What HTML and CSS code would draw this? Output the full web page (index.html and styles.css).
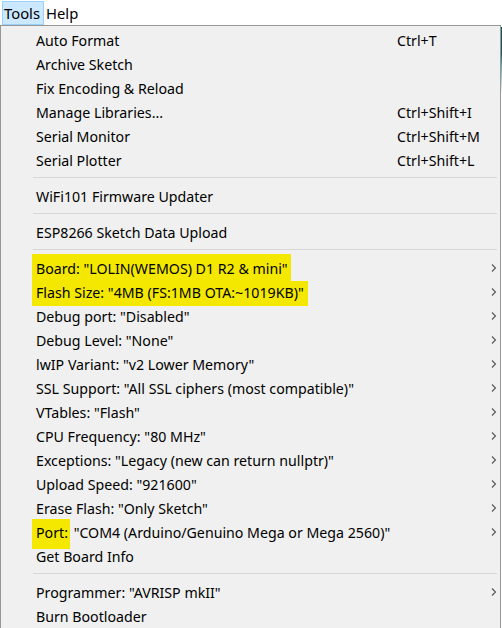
FILE: index.html
```html
<!DOCTYPE html>
<html>
<head>
<meta charset="utf-8">
<link rel="stylesheet" href="styles.css">
</head>
<body>
<div class="menubar">
  <span class="top-item active">Tools</span>
  <span class="top-item">Help</span>
</div>
<div class="stage">
  <div class="menu">
    <div class="row"><span class="label">Auto Format</span><span class="key">Ctrl+T</span><span class="arrow"></span></div>
    <div class="row"><span class="label">Archive Sketch</span><span class="key"></span><span class="arrow"></span></div>
    <div class="row"><span class="label">Fix Encoding &amp; Reload</span><span class="key"></span><span class="arrow"></span></div>
    <div class="row"><span class="label">Manage Libraries...</span><span class="key">Ctrl+Shift+I</span><span class="arrow"></span></div>
    <div class="row"><span class="label">Serial Monitor</span><span class="key">Ctrl+Shift+M</span><span class="arrow"></span></div>
    <div class="row"><span class="label">Serial Plotter</span><span class="key">Ctrl+Shift+L</span><span class="arrow"></span></div>
    <div class="sep"></div>
    <div class="row"><span class="label">WiFi101 Firmware Updater</span><span class="key"></span><span class="arrow"></span></div>
    <div class="sep"></div>
    <div class="row"><span class="label">ESP8266 Sketch Data Upload</span><span class="key"></span><span class="arrow"></span></div>
    <div class="sep"></div>
    <div class="row"><span class="label"><span class="hl hl-board">Board: "LOLIN(WEMOS) D1 R2 &amp; mini"</span></span><span class="key"></span><span class="arrow"><svg width="6" height="10" viewBox="0 0 6 10"><path d="M1 1.5 L4.5 5 L1 8.5" fill="none" stroke="#555" stroke-width="1.1"/></svg></span></div>
    <div class="row"><span class="label"><span class="hl hl-flash">Flash Size: "4MB (FS:1MB OTA:~1019KB)"</span></span><span class="key"></span><span class="arrow"><svg width="6" height="10" viewBox="0 0 6 10"><path d="M1 1.5 L4.5 5 L1 8.5" fill="none" stroke="#555" stroke-width="1.1"/></svg></span></div>
    <div class="row"><span class="label">Debug port: "Disabled"</span><span class="key"></span><span class="arrow"><svg width="6" height="10" viewBox="0 0 6 10"><path d="M1 1.5 L4.5 5 L1 8.5" fill="none" stroke="#555" stroke-width="1.1"/></svg></span></div>
    <div class="row"><span class="label">Debug Level: "None"</span><span class="key"></span><span class="arrow"><svg width="6" height="10" viewBox="0 0 6 10"><path d="M1 1.5 L4.5 5 L1 8.5" fill="none" stroke="#555" stroke-width="1.1"/></svg></span></div>
    <div class="row"><span class="label">lwIP Variant: "v2 Lower Memory"</span><span class="key"></span><span class="arrow"><svg width="6" height="10" viewBox="0 0 6 10"><path d="M1 1.5 L4.5 5 L1 8.5" fill="none" stroke="#555" stroke-width="1.1"/></svg></span></div>
    <div class="row"><span class="label">SSL Support: "All SSL ciphers (most compatible)"</span><span class="key"></span><span class="arrow"><svg width="6" height="10" viewBox="0 0 6 10"><path d="M1 1.5 L4.5 5 L1 8.5" fill="none" stroke="#555" stroke-width="1.1"/></svg></span></div>
    <div class="row"><span class="label">VTables: "Flash"</span><span class="key"></span><span class="arrow"><svg width="6" height="10" viewBox="0 0 6 10"><path d="M1 1.5 L4.5 5 L1 8.5" fill="none" stroke="#555" stroke-width="1.1"/></svg></span></div>
    <div class="row"><span class="label">CPU Frequency: "80 MHz"</span><span class="key"></span><span class="arrow"><svg width="6" height="10" viewBox="0 0 6 10"><path d="M1 1.5 L4.5 5 L1 8.5" fill="none" stroke="#555" stroke-width="1.1"/></svg></span></div>
    <div class="row"><span class="label">Exceptions: "Legacy (new can return nullptr)"</span><span class="key"></span><span class="arrow"><svg width="6" height="10" viewBox="0 0 6 10"><path d="M1 1.5 L4.5 5 L1 8.5" fill="none" stroke="#555" stroke-width="1.1"/></svg></span></div>
    <div class="row"><span class="label">Upload Speed: "921600"</span><span class="key"></span><span class="arrow"><svg width="6" height="10" viewBox="0 0 6 10"><path d="M1 1.5 L4.5 5 L1 8.5" fill="none" stroke="#555" stroke-width="1.1"/></svg></span></div>
    <div class="row"><span class="label">Erase Flash: "Only Sketch"</span><span class="key"></span><span class="arrow"><svg width="6" height="10" viewBox="0 0 6 10"><path d="M1 1.5 L4.5 5 L1 8.5" fill="none" stroke="#555" stroke-width="1.1"/></svg></span></div>
    <div class="row"><span class="label"><span class="hl hl-port">Port:</span> "COM4 (Arduino/Genuino Mega or Mega 2560)"</span><span class="key"></span><span class="arrow"><svg width="6" height="10" viewBox="0 0 6 10"><path d="M1 1.5 L4.5 5 L1 8.5" fill="none" stroke="#555" stroke-width="1.1"/></svg></span></div>
    <div class="row"><span class="label">Get Board Info</span><span class="key"></span><span class="arrow"></span></div>
    <div class="sep"></div>
    <div class="row"><span class="label">Programmer: "AVRISP mkII"</span><span class="key"></span><span class="arrow"><svg width="6" height="10" viewBox="0 0 6 10"><path d="M1 1.5 L4.5 5 L1 8.5" fill="none" stroke="#555" stroke-width="1.1"/></svg></span></div>
    <div class="row"><span class="label">Burn Bootloader</span><span class="key"></span><span class="arrow"></span></div>
  </div>
  <div class="edge"></div>
</div>
</body>
</html>
```

FILE: styles.css
```css
html, body {
  margin: 0;
  padding: 0;
  background: #ffffff;
  overflow: hidden;
}
body {
  width: 502px;
  height: 628px;
  font-family: "Noto Sans", "Open Sans", sans-serif;
  font-size: 14.2px;
  color: #000;
}
.menubar {
  height: 25px;
  display: flex;
  align-items: stretch;
  padding-left: 2px;
  box-sizing: border-box;
  padding-top: 1px;
}
.top-item {
  display: flex;
  align-items: center;
  padding: 0 3px 0 1px;
  border: 1px solid transparent;
  line-height: 22px;
  font-size: 14.8px;
}
.top-item.active {
  background: #cce8ff;
  border-color: #99d1ff;
}
.stage {
  display: flex;
  height: 603px;
}
.menu {
  width: 501px;
  box-sizing: border-box;
  background: #f0f0f0;
  border: 1px solid #979797;
  border-bottom: none;
  padding-top: 2px;
  overflow: hidden;
}
.edge {
  width: 1px;
  background: linear-gradient(#ffffff 0px, #ffffff 2px, #0d5b5e 2px, #0d5b5e 28px, #5fa7ab 40px, #cfe2e3 60px, #ffffff 70px);
}
.row {
  display: grid;
  grid-template-columns: 361px 92px 1fr;
  height: 24px;
  align-items: center;
  padding-left: 35px;
}
.label {
  white-space: nowrap;
}
.key {
  white-space: nowrap;
}
.arrow {
  display: flex;
  align-items: center;
  padding-left: 2px;
}
.sep {
  height: 1px;
  background: #d7d7d7;
  margin: 5px 3px 6px 32px;
}
.hl {
  background: #f4e800;
  margin-left: -4px;
  padding-left: 4px;
}
.hl-board {
  padding-top: 5px;
  padding-bottom: 4px;
  padding-right: 3px;
}
.hl-flash {
  padding-top: 2px;
  padding-bottom: 4px;
  padding-right: 4px;
}
.hl-port {
  padding-top: 4px;
  padding-bottom: 7px;
  padding-right: 2px;
}
```
